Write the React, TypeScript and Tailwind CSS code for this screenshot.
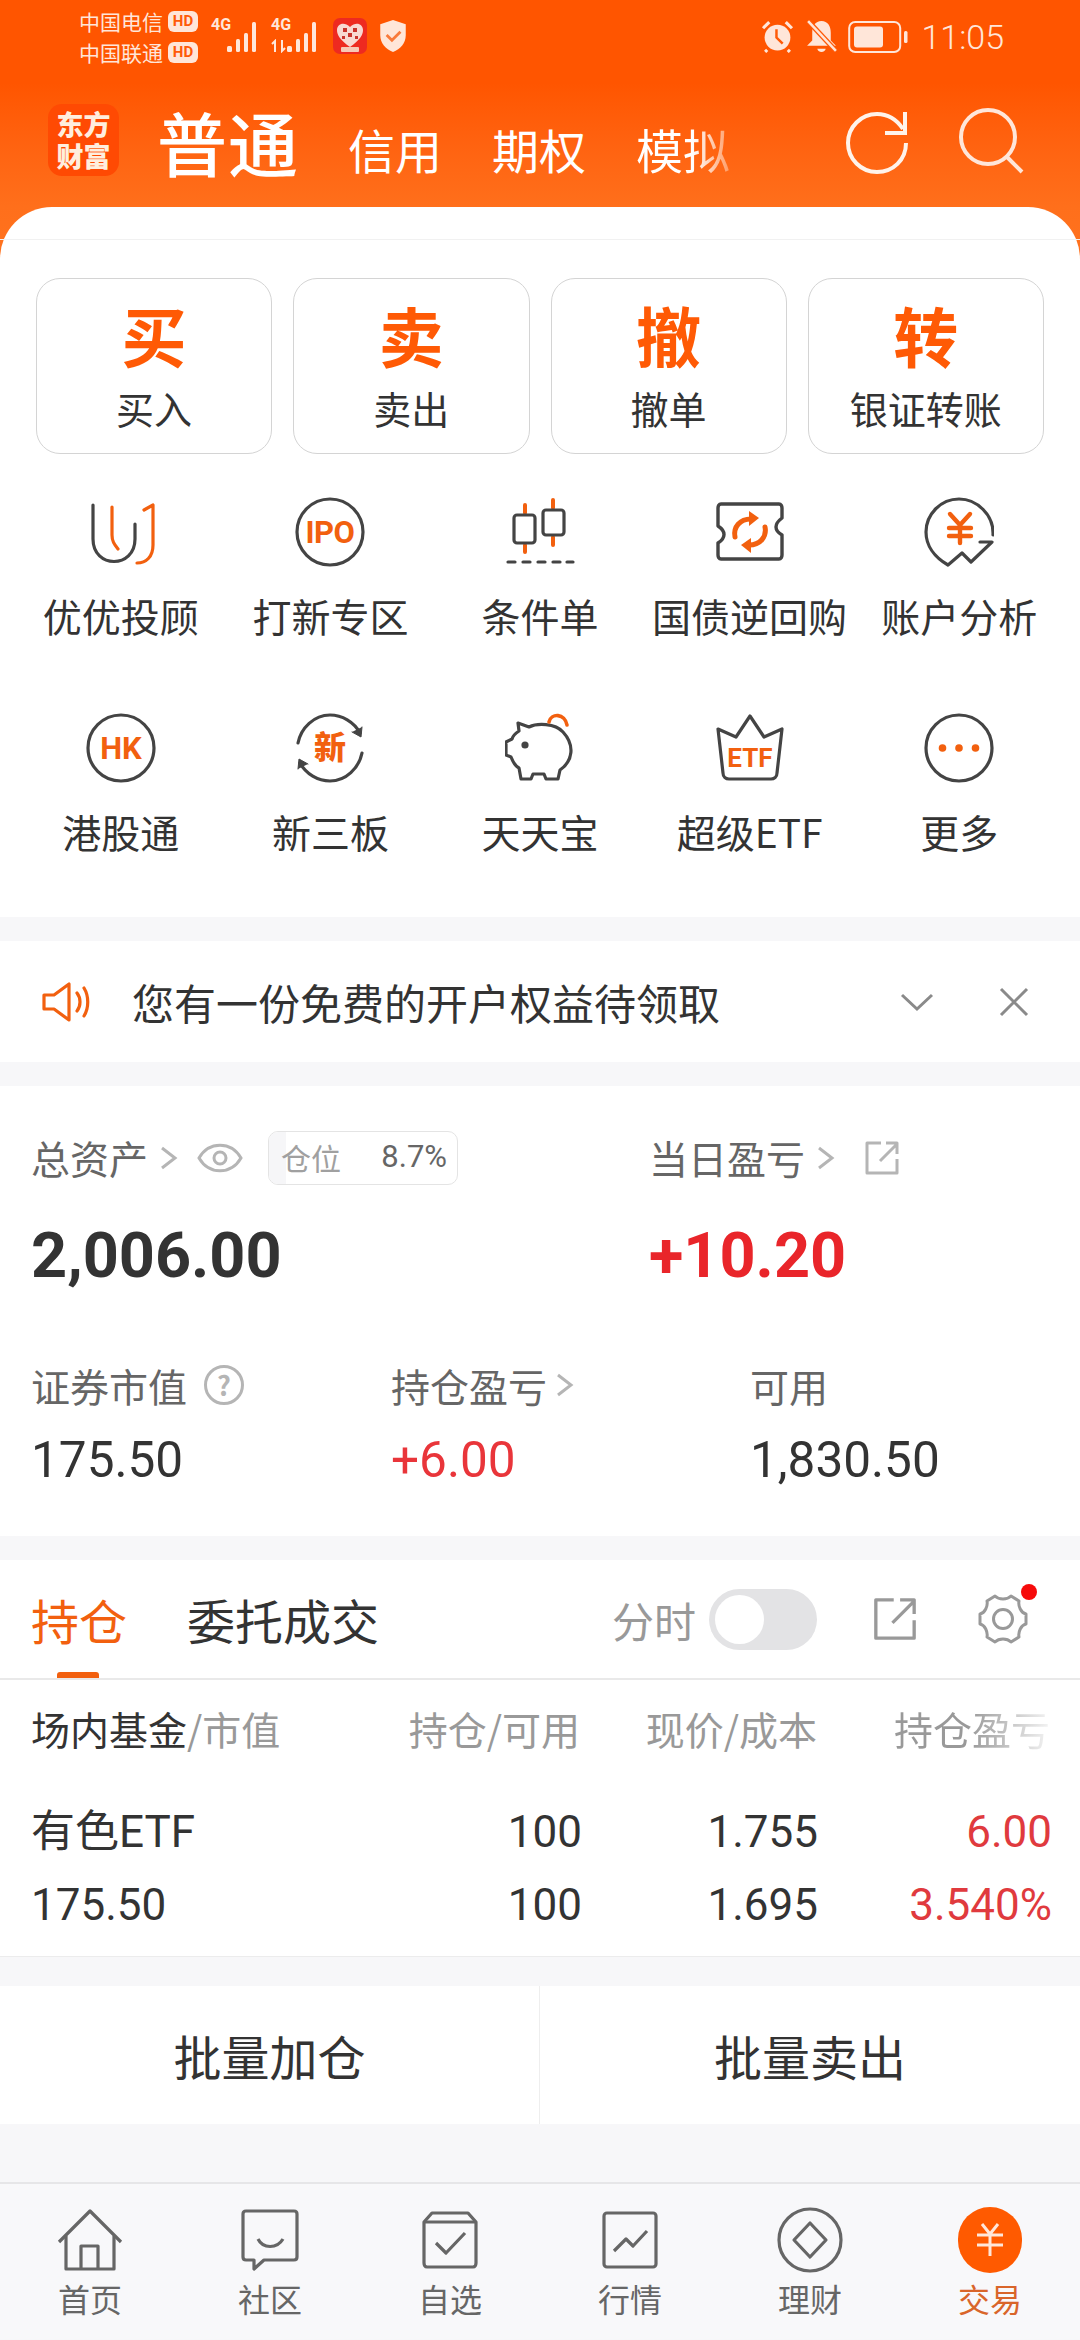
import React from "react";

const DK = "#444444";
const OR = "#f2600f";
const F = { fontFamily: '"Noto Sans CJK SC", sans-serif' };
const svgText = '"Roboto", "Noto Sans CJK SC", sans-serif';

function Ic({ children, w = 70, h = 70 }: { children: React.ReactNode; w?: number; h?: number }) {
  return (
    <svg width={w} height={h} viewBox={`0 0 ${w} ${h}`} fill="none" strokeLinecap="round" strokeLinejoin="round">
      {children}
    </svg>
  );
}

const menuIcons: Record<string, React.ReactNode> = {
  uu: (
    <Ic>
      <path d="M7 8V42C7 72 49 72 49 42V27" stroke={DK} strokeWidth="3.2" />
      <path d="M26 10V38C26 44 28 47 32 52" stroke={OR} strokeWidth="3.2" />
      <path d="M58 13L67 8V48C67 60 60 66 51 66" stroke={OR} strokeWidth="3.2" />
    </Ic>
  ),
  ipo: (
    <Ic>
      <circle cx="35" cy="35" r="33" stroke={DK} strokeWidth="3.2" />
      <text x="35" y="46" textAnchor="middle" fontSize="31" fontWeight="700" fill={OR} fontFamily={svgText} letterSpacing="-0.5">IPO</text>
    </Ic>
  ),
  cond: (
    <Ic>
      <path d="M20 8V16M20 48V55M48 3V11M48 40V48" stroke={OR} strokeWidth="4" />
      <rect x="9" y="18" width="21" height="28" rx="3" stroke={DK} strokeWidth="3.2" />
      <rect x="38" y="13" width="21" height="25" rx="3" stroke={DK} strokeWidth="3.2" />
      <path d="M3 65H10M18 65H25M33 65H40M48 65H55M62 65H68" stroke={DK} strokeWidth="3.2" />
    </Ic>
  ),
  bond: (
    <Ic>
      <path d="M6 7H64C66 7 67 9 67 11V21C59 27 59 33 67 38V58C67 60 66 62 64 62H6C4 62 3 60 3 58V46C11 41 11 34 3 29V11C3 9 4 7 6 7Z" stroke={DK} strokeWidth="3.4" />
      <path d="M20 40C18 30 25 22 36 22" stroke={OR} strokeWidth="5" />
      <path d="M34 14L44 21L34 29Z" fill={OR} />
      <path d="M50 30C52 40 45 48 34 48" stroke={OR} strokeWidth="5" />
      <path d="M36 41L26 48L36 56" fill={OR} />
    </Ic>
  ),
  ana: (
    <Ic>
      <path d="M69 38C70 18 53 2 35 2C17 2 2 17 2 35C2 48 10 60 24 68L38 56L47 65L68 45H56" stroke={DK} strokeWidth="3.2" />
      <path d="M26 17L36 28L46 17M36 28V46M25 31H47M25 39H47" stroke={OR} strokeWidth="4.4" />
    </Ic>
  ),
  hk: (
    <Ic>
      <circle cx="35" cy="35" r="33" stroke={DK} strokeWidth="3.2" />
      <text x="35" y="46" textAnchor="middle" fontSize="31" fontWeight="700" fill={OR} fontFamily={svgText}>HK</text>
    </Ic>
  ),
  xin: (
    <Ic>
      <path d="M3 30C6 15 19 2 35 2C47 2 59 9 65 20" stroke={DK} strokeWidth="3.2" />
      <path d="M67 14L66 24L57 19" fill={DK} stroke={DK} strokeWidth="1" />
      <path d="M67 40C64 55 51 68 35 68C23 68 11 61 5 50" stroke={DK} strokeWidth="3.2" />
      <path d="M3 56L4 46L13 51" fill={DK} stroke={DK} strokeWidth="1" />
      <text x="35" y="46" textAnchor="middle" fontSize="32" fontWeight="900" fill={OR} fontFamily={'"Noto Sans CJK SC", sans-serif'}>新</text>
    </Ic>
  ),
  pig: (
    <Ic>
      <path d="M13 10L24 14C32 10 50 10 58 19C70 32 68 48 55 57L53 66H41L39 61H28L26 66H16L14 55C10 53 8 49 6 44L1 42V29L7 26C8 22 11 20 14 18Z" stroke={DK} strokeWidth="3.2" />
      <circle cx="20" cy="32" r="3.6" fill={DK} />
      <path d="M44 9C46 0 60 0 62 12" stroke={OR} strokeWidth="3.6" />
    </Ic>
  ),
  etf: (
    <Ic>
      <path d="M3 16L21 24L35 3L49 24L67 16L62 60C62 64 59 66 56 66H14C11 66 8 64 8 60Z" stroke={DK} strokeWidth="3.2" />
      <text x="35" y="54" textAnchor="middle" fontSize="26" fontWeight="700" fill={OR} fontFamily={svgText}>ETF</text>
    </Ic>
  ),
  more: (
    <Ic>
      <circle cx="35" cy="35" r="33" stroke={DK} strokeWidth="3.2" />
      <circle cx="18.5" cy="35" r="3.8" fill={OR} />
      <circle cx="35" cy="35" r="3.8" fill={OR} />
      <circle cx="51.5" cy="35" r="3.8" fill={OR} />
    </Ic>
  ),
};

const menu = [
  ["uu", "优优投顾"], ["ipo", "打新专区"], ["cond", "条件单"], ["bond", "国债逆回购"], ["ana", "账户分析"],
  ["hk", "港股通"], ["xin", "新三板"], ["pig", "天天宝"], ["etf", "超级ETF"], ["more", "更多"],
];

const actions = [["买", "买入"], ["卖", "卖出"], ["撤", "撤单"], ["转", "银证转账"]];

function Chevron({ c = "#b5b5b5" }: { c?: string }) {
  return (
    <svg width="20" height="28" viewBox="0 0 20 28" fill="none" stroke={c} strokeWidth="3">
      <path d="M3 4L16 14L3 24" />
    </svg>
  );
}

function ExtIcon({ s, c, w }: { s: number; c: string; w: number }) {
  return (
    <svg width={s} height={s} viewBox="0 0 36 36" fill="none" stroke={c} strokeWidth={w} strokeLinejoin="round">
      <path d="M17 3H3V33H33V19" />
      <path d="M16 21L33 4M22 3H33V14" />
    </svg>
  );
}

function Signal({ roaming }: { roaming?: boolean }) {
  return (
    <div className="relative w-[50px] h-[34px]">
      <span className="absolute top-[-3px] left-0 text-[16px] leading-[18px] font-bold text-[#ffe6d9]" style={{ fontFamily: '"Roboto", sans-serif' }}>4G</span>
      {roaming && (
        <svg className="absolute left-0 bottom-0" width="16" height="14" viewBox="0 0 16 14" fill="none" stroke="#ffe6d9" strokeWidth="2">
          <path d="M4 13V2L1 5M11 1V12L14 9" />
        </svg>
      )}
      <svg className="absolute right-0 bottom-0" width="34" height="32" viewBox="0 0 34 32" fill="#ffe6d9">
        <rect x="0" y="25" width="5" height="6" rx="1.5" />
        <rect x="9" y="18" width="4" height="13" rx="1.5" />
        <rect x="17" y="12" width="4" height="19" rx="1.5" />
        <rect x="25" y="1" width="4" height="30" rx="1.5" />
      </svg>
    </div>
  );
}

function Hd() {
  return (
    <span className="inline-flex items-center justify-center w-[30px] h-[21px] rounded-[6px] bg-[#ffe6d9] text-[#ff5a08] text-[15px] leading-none font-bold" style={{ fontFamily: '"Roboto", sans-serif' }}>HD</span>
  );
}

function StatusBar() {
  return (
    <div className="h-[73px] flex items-center pl-[79px] pr-[76px] text-[#ffe6d9]">
      <div className="flex flex-col gap-[10px] text-[21px] leading-[21px]">
        <div className="flex items-center gap-[5px]">中国电信<Hd /></div>
        <div className="flex items-center gap-[5px]">中国联通<Hd /></div>
      </div>
      <div className="flex items-center gap-[10px] ml-[13px] mt-[-2px]"><Signal /><Signal roaming /></div>
      <svg className="ml-[12px] mt-[-2px]" width="34" height="36" viewBox="0 0 34 36">
        <rect width="34" height="36" rx="7" fill="#ee2a20" />
        <path d="M17 29C7 22 4 17 4 12C4 6 11 3 17 9C23 3 30 6 30 12C30 17 27 22 17 29Z" fill="#f8d9d2" />
        <path d="M10 10h4v4h-4zM20 10h4v4h-4zM15 15h4v4h-4zM9 18h3v3H9zM22 18h3v3h-3z" fill="#c9332c" />
        <rect x="8" y="29" width="18" height="5" rx="1" fill="#f6c9b6" />
      </svg>
      <svg className="ml-[12px] mt-[-2px]" width="28" height="34" viewBox="0 0 26 32">
        <path d="M13 1L25 5V15C25 23 20 28 13 31C6 28 1 23 1 15V5Z" fill="#ffe6d9" />
        <path d="M7 15L12 20L20 12" fill="none" stroke="#f97a3b" strokeWidth="2.6" />
      </svg>
      <div className="ml-auto flex items-center">
        <svg width="33" height="33" viewBox="0 0 32 32" fill="#ffe6d9">
          <circle cx="16" cy="17" r="12.5" />
          <path d="M2 8L8 2M30 8L24 2M6 29L4 31M26 29L28 31" stroke="#ffe6d9" strokeWidth="3" />
          <path d="M15 9V17L21 23" stroke="#ff5a08" strokeWidth="2.4" fill="none" />
        </svg>
        <svg className="ml-[11px]" width="33" height="35" viewBox="0 0 32 34" fill="#ffe6d9">
          <path d="M16 2C10 2 7 7 7 13V21L2 26H30L25 21V13C25 7 22 2 16 2Z" />
          <path d="M12 29H20C20 33 12 33 12 29Z" />
          <path d="M3 2L30 31" stroke="#ff5a08" strokeWidth="5" />
          <path d="M3 2L30 31" stroke="#ffe6d9" strokeWidth="2.4" />
        </svg>
        <svg className="ml-[10px]" width="60" height="34" viewBox="0 0 60 34">
          <rect x="1.2" y="2" width="51" height="30" rx="6" fill="none" stroke="#ffe6d9" strokeWidth="2" />
          <rect x="6" y="6.5" width="29" height="21" rx="3" fill="#ffe6d9" />
          <rect x="56" y="11" width="3.5" height="12" rx="1.5" fill="#ffe6d9" />
        </svg>
        <span className="ml-[13px] text-[34px] leading-none" style={{ fontFamily: '"Roboto", sans-serif', fontWeight: 300 }}>11:05</span>
      </div>
    </div>
  );
}

function Header() {
  return (
    <div className="h-[134px] flex items-start pl-[48px] pr-[55px] text-white">
      <div className="w-[71px] h-[72px] mt-[31px] rounded-[14px] bg-[#ff4a03] flex flex-col items-center justify-center text-[#ffeede] text-[27px] leading-[32px] font-black">
        <span>东方</span>
        <span>财富</span>
      </div>
      <span className="ml-[38px] mt-[20px] text-[70px] leading-[98px] w-[142px] tracking-[1px]" style={{ fontWeight: 500 }}>普通</span>
      <span className="ml-[49px] mt-[43px] text-[47px] leading-[66px]">信用</span>
      <span className="ml-[50px] mt-[43px] text-[47px] leading-[66px]">期权</span>
      <span className="ml-[50px] mt-[43px] text-[47px] leading-[66px] bg-gradient-to-r from-white from-60% to-[#ff9a62] bg-clip-text text-transparent">模拟</span>
      <svg className="ml-auto mt-[36px]" width="64" height="66" viewBox="0 0 64 66" fill="none" stroke="#fff3ea" strokeWidth="4">
        <path d="M61 34C61 51 48 63 32 63C16 63 3 50 3 34C3 18 16 5 32 5C44 5 52 11 58 20" />
        <path d="M60 3V24H40" />
      </svg>
      <svg className="ml-[50px] mt-[35px]" width="66" height="66" viewBox="0 0 66 66" fill="none" stroke="#ffe6d9" strokeWidth="4">
        <circle cx="29" cy="29" r="27" />
        <path d="M48 49L63 64" />
      </svg>
    </div>
  );
}

function Nav({ label, active, children }: { label: string; active?: boolean; children: React.ReactNode }) {
  return (
    <div className="flex flex-col items-center w-[180px]">
      <div className="h-[68px] flex items-center justify-center">{children}</div>
      <span className={`text-[32px] leading-[40px] mt-[4px] ${active ? "text-[#d9652a]" : "text-[#666666]"}`}>{label}</span>
    </div>
  );
}

export default function App() {
  const navStroke = { fill: "none", stroke: "#666666", strokeWidth: 3.2, strokeLinejoin: "round" as const };
  return (
    <div className="w-[1080px] h-[2340px] overflow-hidden bg-[#f7f7f9]" style={F}>
      <div className="bg-gradient-to-b from-[#ff5500] from-40% to-[#ff6f1b]">
        <StatusBar />
        <Header />
      </div>

      <div className="bg-gradient-to-b from-[#ff6f1b] to-[#ff731f] h-[60px] mb-[-60px]" />
      <div className="relative bg-white rounded-t-[52px] h-[710px]">
        <div className="h-[33px] border-b border-[#f1f1f1]" />
        <div className="pt-[38px] px-[36px] grid grid-cols-4 gap-x-[21px]">
          {actions.map(([big, small]) => (
            <div key={big} className="h-[176px] rounded-[24px] border border-[#d4d4d4] flex flex-col items-center">
              <span className="text-[65px] leading-[70px] mt-[20px] font-bold text-[#ff5a05]">{big}</span>
              <span className="text-[38px] leading-[52px] mt-[13px] text-[#333333]">{small}</span>
            </div>
          ))}
        </div>
        <div className="mt-[43px] px-[16px] grid grid-cols-5 gap-y-[39px]">
          {menu.map(([k, label]) => (
            <div key={k} className="flex flex-col items-center h-[177px]">
              <div className="h-[70px]">{menuIcons[k]}</div>
              <span className="text-[39px] leading-[54px] mt-[21px] text-[#333333] whitespace-nowrap">{label}</span>
            </div>
          ))}
        </div>
      </div>

      <div className="mt-[24px] h-[121px] bg-white flex items-center pl-[42px] pr-[50px]">
        <svg width="48" height="40" viewBox="0 0 48 40" fill="none" stroke="#f2600f" strokeWidth="3.2" strokeLinejoin="round" strokeLinecap="round">
          <path d="M2 13H12L27 2V38L12 27H2Z" />
          <path d="M35 11C39 16 39 24 35 29M42 6C47 14 47 26 42 34" />
        </svg>
        <span className="ml-[42px] text-[42px] leading-[56px] text-[#333333]">您有一份免费的开户权益待领取</span>
        <svg className="ml-auto" width="34" height="20" viewBox="0 0 34 20" fill="none" stroke="#8a8a8a" strokeWidth="3">
          <path d="M2 3L17 17L32 3" />
        </svg>
        <svg className="ml-[64px]" width="32" height="32" viewBox="0 0 32 32" fill="none" stroke="#8a8a8a" strokeWidth="3">
          <path d="M3 3L29 29M29 3L3 29" />
        </svg>
      </div>

      <div className="mt-[24px] h-[450px] bg-white pl-[31px] pt-[45px]">
        <div className="flex h-[53px]">
          <div className="w-[618px] flex items-center text-[39px] text-[#666666]">
            <span>总资产</span>
            <span className="ml-[11px]"><Chevron /></span>
            <svg className="ml-[18px]" width="46" height="32" viewBox="0 0 46 32" fill="none" stroke="#b5b5b5" strokeWidth="3">
              <path d="M2 16C12 -1 34 -1 44 16C34 33 12 33 2 16Z" />
              <circle cx="23" cy="16" r="6" />
            </svg>
            <div className="relative ml-[25px] w-[190px] h-[54px] rounded-[10px] border border-[#e4e4e4] overflow-hidden flex items-center text-[30px] pl-[12px]">
              <div className="absolute left-0 top-0 bottom-0 w-[17px] bg-[#f6f6f8]" />
              <span className="relative text-[#a0a0a0]">仓位</span>
              <span className="relative ml-auto mr-[10px] text-[31px] text-[#666666]" style={{ fontFamily: '"Roboto", sans-serif' }}>8.7%</span>
            </div>
          </div>
          <div className="flex items-center text-[39px] text-[#666666]">
            <span>当日盈亏</span>
            <span className="ml-[11px]"><Chevron /></span>
            <span className="ml-[28px]"><ExtIcon s={36} c="#b5b5b5" w={3} /></span>
          </div>
        </div>
        <div className="flex mt-[37px] h-[70px] items-center text-[63px] font-bold" style={{ fontFamily: '"Roboto", sans-serif' }}>
          <span className="w-[618px] text-[#333333]">2,006.00</span>
          <span className="text-[#e9252a]">+10.20</span>
        </div>
        <div className="grid grid-cols-[360px_359px_1fr] mt-[68px]">
          <div className="flex items-center h-[52px] text-[39px] text-[#666666]">
            证券市值
            <span className="ml-[17px] w-[40px] h-[40px] rounded-full border-[3px] border-[#b5b5b5] flex items-center justify-center text-[27px] font-bold text-[#b5b5b5]">?</span>
          </div>
          <div className="flex items-center h-[52px] text-[39px] text-[#666666]">
            持仓盈亏<span className="ml-[8px]"><Chevron /></span>
          </div>
          <div className="flex items-center h-[52px] text-[39px] text-[#666666]">可用</div>
          {[["175.50", "text-[#333333]"], ["+6.00", "text-[#e9353a]"], ["1,830.50", "text-[#333333]"]].map(([v, c]) => (
            <div key={v} className={`mt-[22px] text-[49.5px] leading-[54px] ${c}`} style={{ fontFamily: '"Roboto", sans-serif' }}>{v}</div>
          ))}
        </div>
      </div>

      <div className="mt-[24px] h-[397px] bg-white">
        <div className="h-[120px] border-b-2 border-[#e9e9e9] flex items-center pl-[31px] pr-[50px] relative">
          <span className="text-[48px] leading-[64px] text-[#f2600f]">持仓</span>
          <span className="ml-[60px] text-[48px] leading-[64px] text-[#333333]">委托成交</span>
          <div className="absolute left-[57px] bottom-0 w-[42px] h-[6px] rounded-t-[3px] bg-[#f2600f]" />
          <span className="ml-auto text-[42px] text-[#999999]">分时</span>
          <div className="ml-[13px] w-[108px] h-[61px] rounded-full bg-[#e3e3e5] flex items-center pl-[6px]">
            <div className="w-[49px] h-[49px] rounded-full bg-white" />
          </div>
          <span className="ml-[55px]"><ExtIcon s={46} c="#999999" w={2.6} /></span>
          <span className="ml-[58px] relative">
            <svg width="54" height="54" viewBox="0 0 54 54" fill="none" stroke="#999999" strokeWidth="3" className="block">
              <path d="M19 4C23 8 31 8 35 4L43 9C42 14 45 21 50 22V32C45 33 42 40 43 45L35 50C31 46 23 46 19 50L11 45C12 40 9 33 4 32V22C9 21 12 14 11 9Z" strokeLinejoin="round" />
              <circle cx="27" cy="27" r="9.5" />
            </svg>
            <span className="absolute right-[-7px] top-[-8px] w-[16px] h-[16px] rounded-full bg-[#f60b0b]" />
          </span>
        </div>
        <div className="grid grid-cols-[340px_209px_237px_233px] pl-[31px] h-[97px] items-center text-[39px] text-[#999999]">
          <span className="whitespace-nowrap"><span className="text-[#333333]">场内基金</span>/市值</span>
          <span className="text-right">持仓/可用</span>
          <span className="text-right">现价/成本</span>
          <span className="text-right bg-gradient-to-r from-[#999999] from-65% to-[#f4f4f4] bg-clip-text text-transparent">持仓盈亏</span>
        </div>
        <div className="pt-[19px] grid grid-cols-[342px_209px_236px_234px] pl-[31px] text-[44px] leading-[73px] text-[#333333]" style={{ fontFamily: '"Roboto", "Noto Sans CJK SC", sans-serif' }}>
          <span>有色ETF</span>
          <span className="text-right">100</span>
          <span className="text-right">1.755</span>
          <span className="text-right text-[#e03a3e]">6.00</span>
          <span>175.50</span>
          <span className="text-right">100</span>
          <span className="text-right">1.695</span>
          <span className="text-right text-[#e03a3e]">3.540%</span>
        </div>
      </div>
      <div className="border-t border-[#ececec] mt-[-1px] h-px" />

      <div className="mt-[29px] h-[138px] bg-white flex items-center text-[48px] text-[#333333]">
        <div className="w-[539px] text-center">批量加仓</div>
        <div className="w-px h-full bg-[#eeeeee]" />
        <div className="flex-1 text-center">批量卖出</div>
      </div>

      <div className="mt-[58px] h-[157px] bg-[#f8f8fa] border-t-2 border-[#e6e6e8] flex pt-[22px]">
        <Nav label="首页">
          <svg width="66" height="62" viewBox="0 0 66 62" {...navStroke}>
            <path d="M2 33L33 2L64 33" />
            <path d="M9 27V60H57V27M24 60V37H41V60" />
          </svg>
        </Nav>
        <Nav label="社区">
          <svg width="58" height="62" viewBox="0 0 58 62" {...navStroke}>
            <path d="M5 2H53C55 2 56 3 56 5V48C56 50 55 51 53 51H23L13 60V51H5C3 51 2 50 2 48V5C2 3 3 2 5 2Z" />
            <path d="M17 30C22 40 36 40 42 30" />
          </svg>
        </Nav>
        <Nav label="自选">
          <svg width="56" height="58" viewBox="0 0 56 58" {...navStroke}>
            <path d="M2 11L10 2H46L54 11V52C54 54 53 56 51 56H5C3 56 2 54 2 52Z" />
            <path d="M2 11H54" />
            <path d="M14 32L24 42L43 22" />
          </svg>
        </Nav>
        <Nav label="行情">
          <svg width="56" height="58" viewBox="0 0 56 58" {...navStroke}>
            <rect x="2" y="2" width="52" height="54" rx="3" />
            <path d="M12 40L24 28L31 35L45 20" />
          </svg>
        </Nav>
        <Nav label="理财">
          <svg width="66" height="66" viewBox="0 0 66 66" {...navStroke}>
            <circle cx="33" cy="33" r="31" />
            <path d="M33 16L49 33L33 50L17 33Z" />
          </svg>
        </Nav>
        <Nav label="交易" active>
          <span className="w-[64px] h-[66px] rounded-full bg-[#ff5a00] flex items-center justify-center">
            <svg width="30" height="34" viewBox="0 0 30 34" fill="none" stroke="#ffe6d9" strokeWidth="3">
              <path d="M7 1L15 11L23 1M15 11V33M2 12H28M2 22H28" />
            </svg>
          </span>
        </Nav>
      </div>
    </div>
  );
}
